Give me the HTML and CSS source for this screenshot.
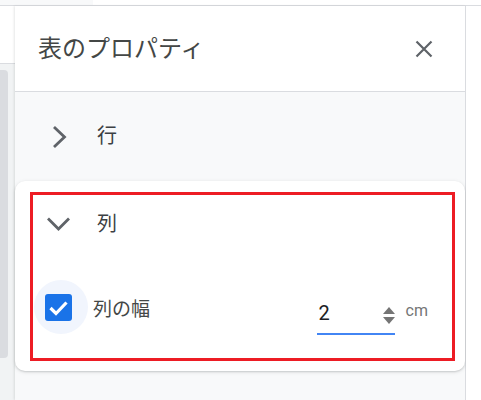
FILE: index.html
```html
<!DOCTYPE html>
<html lang="ja">
<head>
<meta charset="utf-8">
<link rel="stylesheet" href="styles.css">
</head>
<body>
<div class="app">
  <div class="topbar"><div class="topbar-tab"></div></div>
  <div class="main">
    <div class="strip">
      <div class="strip-top"></div>
      <div class="strip-body"><div class="scrollbar"></div></div>
    </div>
    <div class="panel">
      <div class="header">
        <div class="title">表のプロパティ</div>
        <svg class="close" width="18" height="18" viewBox="0 0 18 18">
          <path d="M1.5 1.5L16.5 16.5M16.5 1.5L1.5 16.5" stroke="#5f6368" stroke-width="2.2" fill="none"/>
        </svg>
      </div>
      <div class="row-collapsed">
        <svg class="chev-right" width="15" height="24" viewBox="0 0 15 24">
          <polyline points="2,2 12.5,12 2,22" stroke="#5f6368" stroke-width="2.8" fill="none"/>
        </svg>
        <span class="row-label">行</span>
      </div>
      <div class="card">
        <div class="highlight">
          <div class="card-head">
            <svg class="chev-down" width="25" height="16" viewBox="0 0 25 16">
              <polyline points="2,2.5 12.5,13 23,2.5" stroke="#5f6368" stroke-width="2.8" fill="none"/>
            </svg>
            <span class="row-label">列</span>
          </div>
          <div class="width-row">
            <div class="halo">
              <div class="checkbox">
                <svg width="27" height="27" viewBox="0 0 27 27">
                  <polyline points="5.5,14 11,19.5 21.5,8.5" stroke="#fff" stroke-width="3.2" fill="none"/>
                </svg>
              </div>
            </div>
            <span class="width-label">列の幅</span>
            <div class="field">
              <span class="value">2</span>
              <svg class="spinner" width="12" height="17" viewBox="0 0 12 17">
                <polygon points="6,0 12,7 0,7" fill="#757575"/>
                <polygon points="0,10 12,10 6,17" fill="#757575"/>
              </svg>
            </div>
            <span class="unit">cm</span>
          </div>
        </div>
      </div>
    </div>
    <div class="right-gap"></div>
  </div>
</div>
</body>
</html>
```
FILE: styles.css
```css
* { box-sizing: border-box; }
html, body { margin: 0; padding: 0; background: #fff; }
body {
  width: 481px;
  height: 400px;
  overflow: hidden;
  font-family: "Noto Sans CJK JP", "Noto Sans", sans-serif;
  color: #3c4043;
}
.app { display: flex; flex-direction: column; height: 400px; }
.topbar {
  height: 6px;
  border-bottom: 1px solid #dadce0;
  display: flex;
}
.topbar-tab { width: 93px; background: #f8f9fa; }
.main { display: flex; flex: 1; }
.strip { width: 15px; display: flex; flex-direction: column; }
.strip-top { height: 58px; border-bottom: 1px solid #dadce0; background: #fff; }
.strip-body { flex: 1; background: #f1f3f4; padding-top: 6px; }
.scrollbar { width: 8px; height: 288px; background: #dadce0; border-radius: 0 4px 4px 0; }
.panel {
  width: 451px;
  background: #f8f9fa;
  border-right: 1px solid #dadce0;
  box-shadow: -1px 0 2px rgba(60, 64, 67, 0.12);
  display: flex;
  flex-direction: column;
}
.header {
  height: 86px;
  background: #fff;
  border-bottom: 1px solid #dadce0;
  display: flex;
  align-items: center;
  justify-content: space-between;
  padding: 0 32px 0 23px;
}
.title { font-size: 24px; line-height: 1; margin-top: -4px; color: #444746; }
.close { display: block; margin-top: 0; }
.row-collapsed {
  height: 89px;
  display: flex;
  align-items: center;
  padding-left: 37px;
}
.chev-right { display: block; margin-top: 1px; }
.row-collapsed .row-label { margin-left: 30px; margin-top: -3px; }
.row-label { font-size: 20px; line-height: 1; color: #3c4043; }
.card {
  background: #fff;
  border-radius: 10px;
  box-shadow: 0 1px 2px rgba(60, 64, 67, 0.2), 0 1px 4px rgba(60, 64, 67, 0.1);
  padding: 11px 10px 10px 15px;
}
.highlight {
  border: 3px solid #ed1c24;
  height: 169px;
  display: flex;
  flex-direction: column;
}
.card-head {
  height: 58px;
  display: flex;
  align-items: center;
  padding-left: 13px;
}
.chev-down { display: block; }
.card-head .row-label { margin-left: 26px; margin-top: -2px; }
.width-row {
  margin-top: 26px;
  height: 56px;
  display: flex;
  align-items: center;
  padding-right: 24px;
}
.halo {
  width: 54px;
  height: 54px;
  margin-left: 1px;
  border-radius: 50%;
  background: #f1f5fd;
  display: flex;
  align-items: center;
  padding-left: 11px;
}
.checkbox {
  width: 27px;
  height: 27px;
  border-radius: 3px;
  background: #1a73e8;
}
.checkbox svg { display: block; }
.width-label { font-size: 19px; line-height: 1; margin-left: 5px; color: #444746; }
.field {
  margin-left: auto;
  width: 78px;
  height: 52px;
  margin-top: 4px;
  border-bottom: 2px solid #4285f4;
  display: flex;
  align-items: flex-end;
  padding: 0 0 8px 2px;
}
.value {
  font-family: Roboto, "Liberation Sans", sans-serif;
  font-size: 20px;
  line-height: 24px;
  color: #202124;
}
.spinner { display: block; margin-left: auto; margin-bottom: 1px; }
.unit {
  font-family: Roboto, "Liberation Sans", sans-serif;
  font-size: 16px;
  line-height: 1;
  color: #757575;
  margin-left: 11px;
  margin-top: 8px;
}
.right-gap { flex: 1; background: #fff; }
```
